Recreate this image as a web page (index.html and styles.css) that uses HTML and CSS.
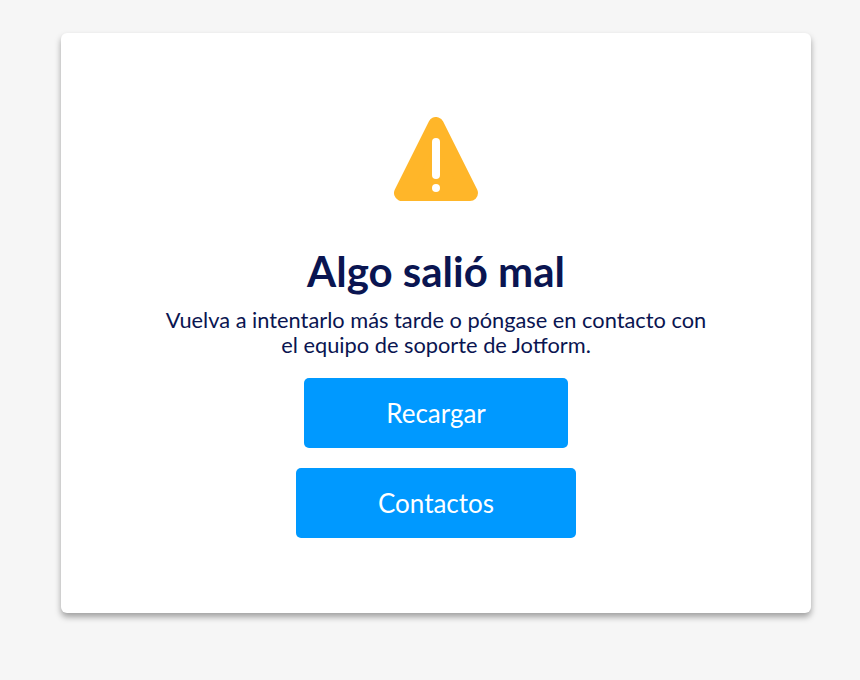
FILE: index.html
```html
<!DOCTYPE html>
<html lang="es">
<head>
  <meta charset="UTF-8">
  <meta name="viewport" content="width=device-width, initial-scale=1.0">
  <title>Algo salió mal - Jotform</title>
  <link rel="stylesheet" href="styles.css">
</head>
<body>

  <div class="card">
    <svg class="warning-icon" width="84" height="84" viewBox="0 0 84 84">
      <polygon points="42,8 8,76 76,76" fill="#ffb629" stroke="#ffb629" stroke-width="16" stroke-linejoin="round"/>
      <rect x="38" y="21" width="8" height="41" rx="4" fill="#fff"/>
      <circle cx="42" cy="71" r="4" fill="#fff"/>
    </svg>
    <h1>Algo salió mal</h1>
    <p>Vuelva a intentarlo más tarde o póngase en contacto con<br>el equipo de soporte de Jotform.</p>
    <a class="btn btn-reload" href="#">Recargar</a>
    <a class="btn btn-contact" href="#">Contactos</a>
  </div>

</body>
</html>
```
FILE: styles.css
```css
* {
  margin: 0;
  padding: 0;
  box-sizing: border-box;
}

body {
  font-family: 'Lato', 'Liberation Sans', sans-serif;
  background-color: #f6f6f6;
  color: #0a1551;
  height: 680px;
  overflow: hidden;
  padding: 33px 49px 0 61px;
}

.card {
  display: flex;
  flex-direction: column;
  align-items: center;
  height: 580px;
  padding-top: 84px;
  background-color: #fff;
  border-radius: 6px;
  box-shadow: 0 4px 6px rgba(0, 0, 0, 0.35);
  text-align: center;
}

.warning-icon {
  display: block;
}

h1 {
  margin-top: 45px;
  font-size: 42px;
  line-height: 50px;
  font-weight: 700;
}

p {
  margin-top: 11px;
  font-size: 21.8px;
  line-height: 25px;
}

.btn {
  display: block;
  height: 70px;
  background-color: #0099ff;
  border-radius: 5px;
  color: #fff;
  font-size: 26px;
  line-height: 70px;
  text-decoration: none;
}

.btn-reload {
  width: 264px;
  margin-top: 21px;
}

.btn-contact {
  width: 280px;
  margin-top: 20px;
}
```
